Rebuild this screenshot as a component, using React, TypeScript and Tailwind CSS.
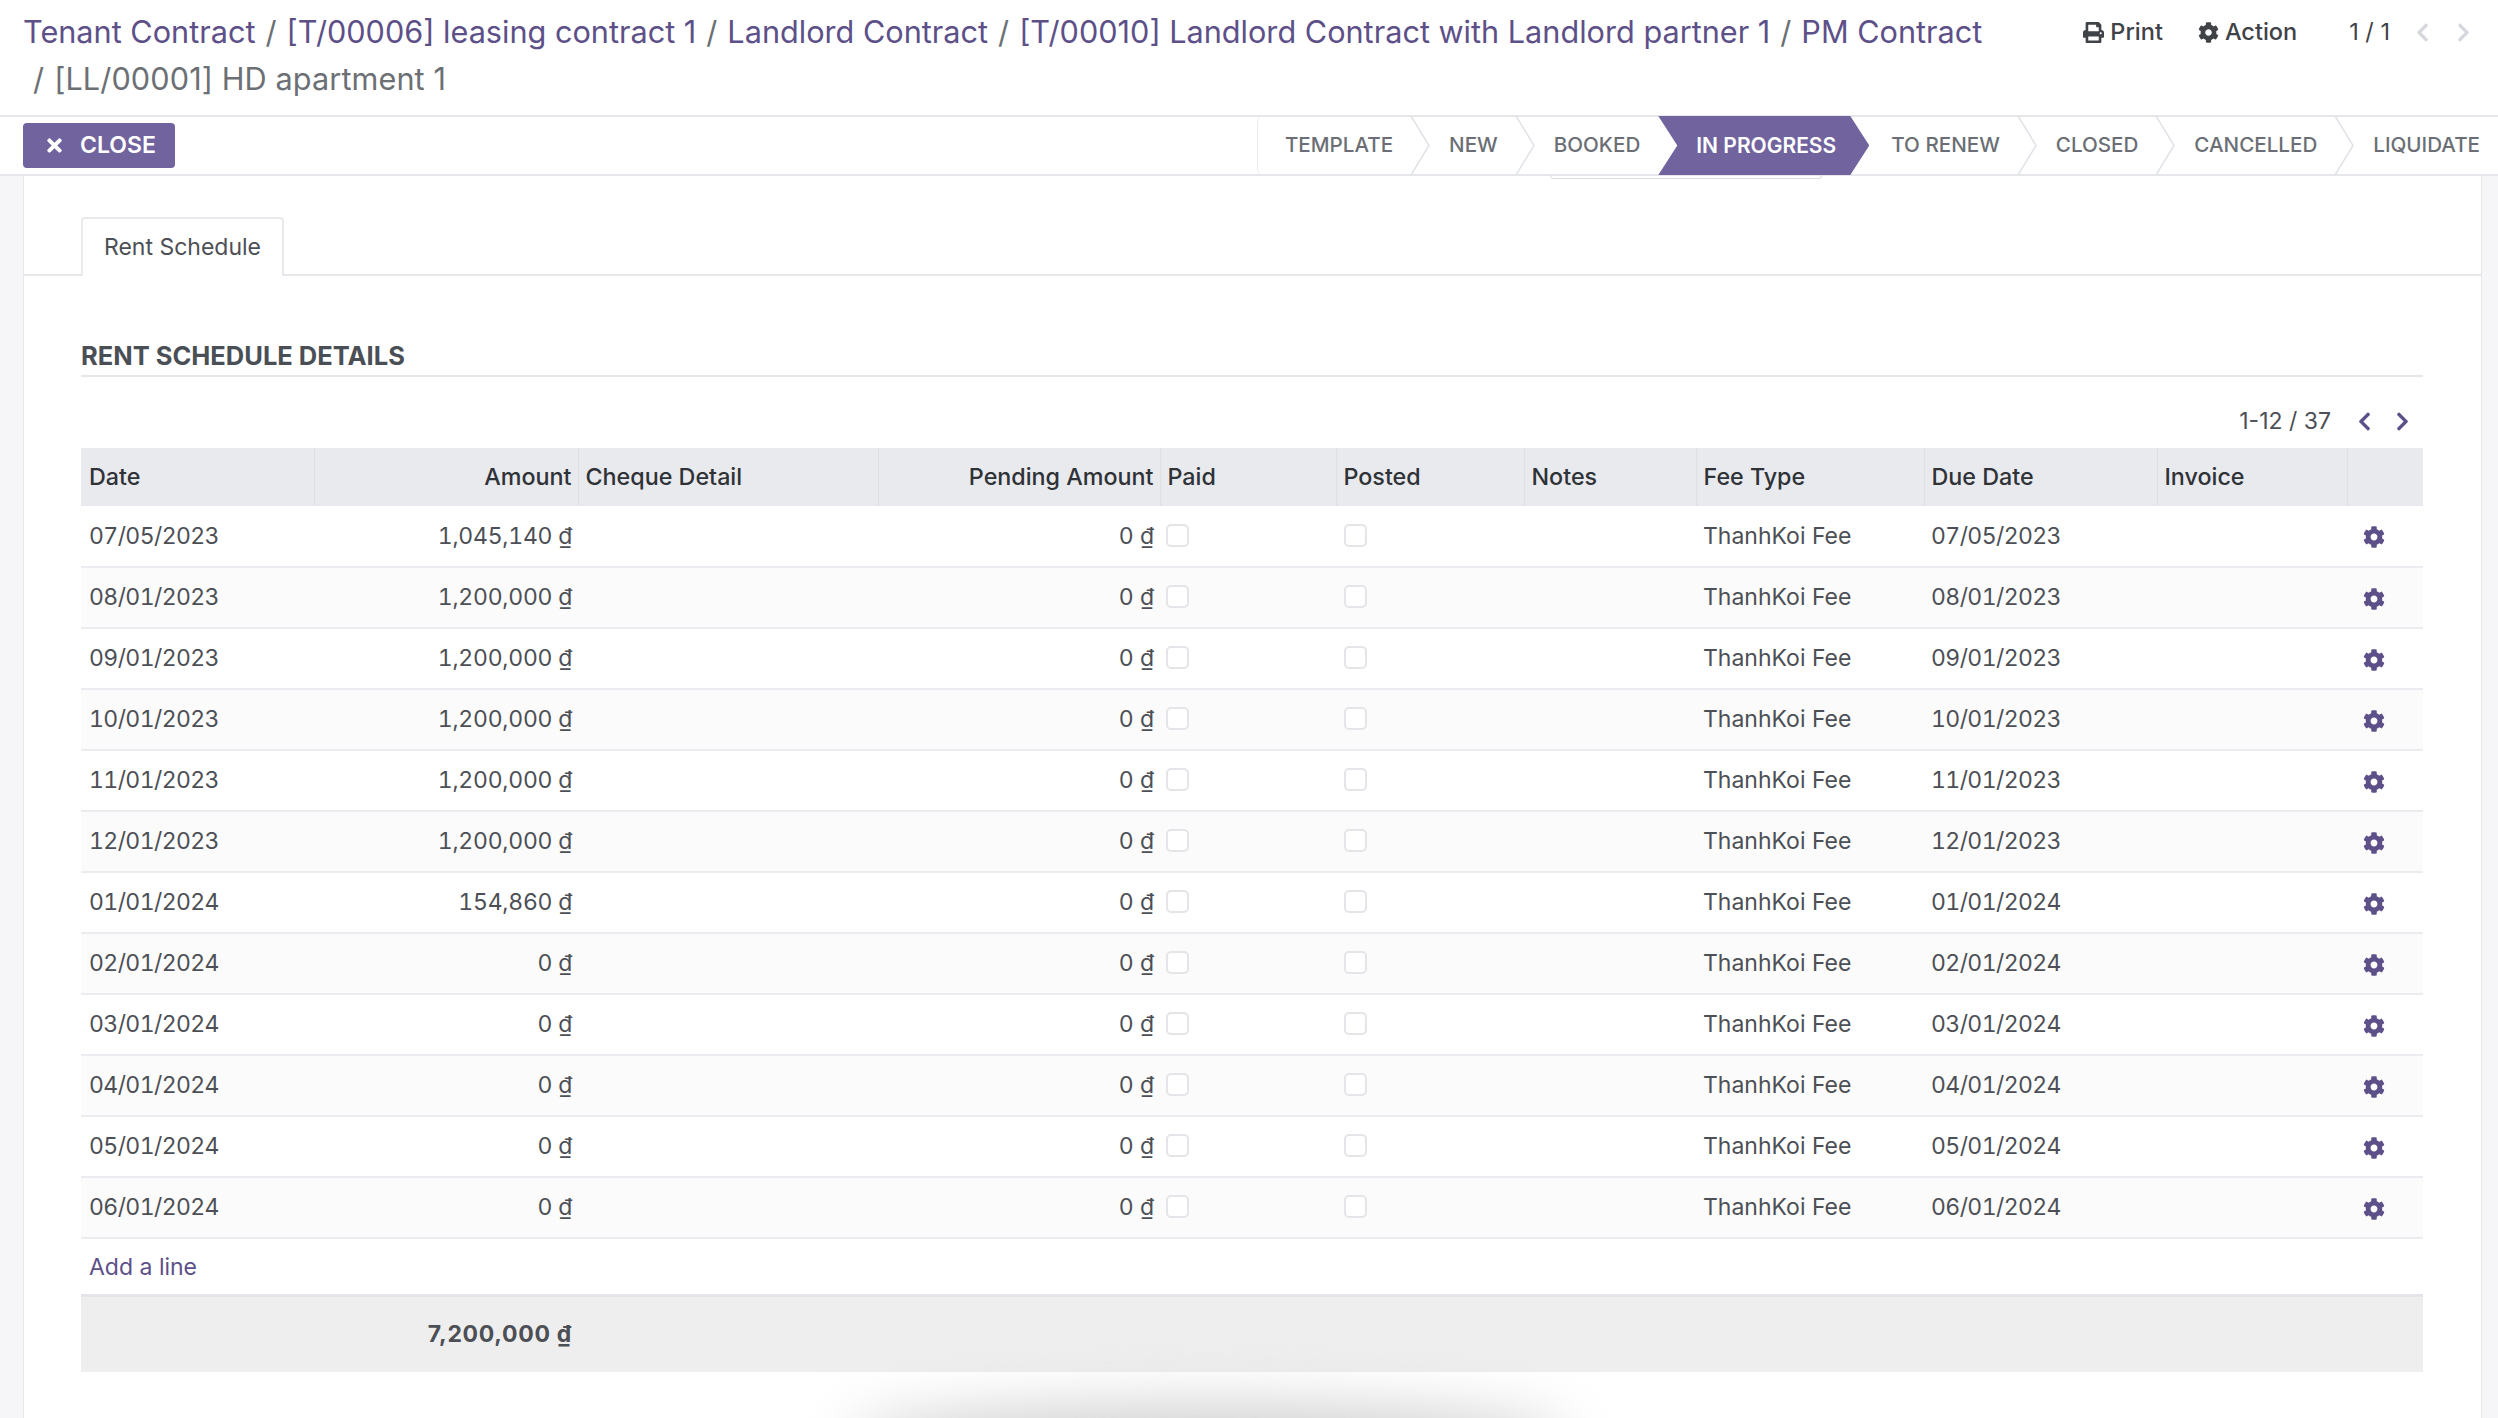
import React from "react";
import { FaCog, FaPrint, FaTimes, FaChevronLeft, FaChevronRight } from "react-icons/fa";

type Row = { date: string; amount: string };

const rows: Row[] = [
  { date: "07/05/2023", amount: "1,045,140" },
  { date: "08/01/2023", amount: "1,200,000" },
  { date: "09/01/2023", amount: "1,200,000" },
  { date: "10/01/2023", amount: "1,200,000" },
  { date: "11/01/2023", amount: "1,200,000" },
  { date: "12/01/2023", amount: "1,200,000" },
  { date: "01/01/2024", amount: "154,860" },
  { date: "02/01/2024", amount: "0" },
  { date: "03/01/2024", amount: "0" },
  { date: "04/01/2024", amount: "0" },
  { date: "05/01/2024", amount: "0" },
  { date: "06/01/2024", amount: "0" },
];

const stages = ["TEMPLATE", "NEW", "BOOKED", "IN PROGRESS", "TO RENEW", "CLOSED", "CANCELLED", "LIQUIDATE"];

const crumbs = [
  "Tenant Contract",
  "[T/00006] leasing contract 1",
  "Landlord Contract",
  "[T/00010] Landlord Contract with Landlord partner 1",
  "PM Contract",
];

const Stage: React.FC<{ label: string; index: number }> = ({ label, index }) => {
  if (label === "IN PROGRESS") {
    return (
      <div className="relative z-10 flex h-[59px] w-[211px] items-center bg-[#71639e] pl-[38px] text-[21px] font-semibold text-white [clip-path:polygon(0_0,192px_0,100%_50%,192px_100%,0_100%,19px_50%)]">
        {label}
      </div>
    );
  }
  let pad = "pl-[38px]";
  if (index === 0) pad = "rounded-l-md border-l border-[#e9ecef] pl-[27px]";
  if (label === "TO RENEW") pad = "pl-[22px]";
  return (
    <div className={`relative flex h-[59px] items-center pr-[18px] text-[20.6px] font-medium text-[#6b6f75] ${pad}`}>
      {label}
      {label !== "LIQUIDATE" && label !== "BOOKED" && (
        <svg className="absolute top-0 left-full h-[59px] w-[20px]" viewBox="0 0 20 59" fill="none">
          <path d="M0 0 L18 29.5 L0 59" stroke="#dfe2e6" strokeWidth="1.5" />
        </svg>
      )}
    </div>
  );
};

const headCell = "border-l border-[#dfe0e5] pr-[6px] pl-[7px] text-[23.3px] font-medium text-[#2f3237]";

export default function App() {
  return (
    <div className="relative h-[1418px] w-[2498px] overflow-hidden bg-white font-['Inter',sans-serif] text-[#4c4f55]">
      <header className="flex h-[115px] items-start justify-between pl-[23px]">
        <div className="w-[1990px] pt-[8px] text-[30.65px] leading-[47px] text-[#6c7075]">
          {crumbs.map((c, i) => (
            <span key={c}>
              {i > 0 && <span className="mx-[10px] text-[#6c7075]">/</span>}
              <span className="text-[#5d5089]">{c}</span>
            </span>
          ))}
          <div className="pl-[10px] tracking-[0.1px]">
            <span className="mr-[10px]">/</span>[LL/00001] HD apartment 1
          </div>
        </div>
        <div className="flex h-[64px] items-center text-[23.5px] text-[#3f4247]">
          <span className="flex items-center gap-[6px] font-medium">
            <FaPrint className="text-[21px]" /> Print
          </span>
          <span className="ml-[35px] flex items-center gap-[6px] font-medium">
            <FaCog className="text-[21px]" /> Action
          </span>
          <span className="ml-[52px]">1 / 1</span>
          <FaChevronLeft className="ml-[22px] text-[21px] text-[#d5d9dd]" />
          <FaChevronRight className="mr-[24px] ml-[20px] text-[21px] text-[#d5d9dd]" />
        </div>
      </header>

      <div className="flex h-[61px] items-center justify-between border-y-2 border-[#e6e7ea] pl-[23px]">
        <button className="flex h-[45px] w-[152px] items-center rounded-[4px] bg-[#71639e] pl-[21px] text-[23px] font-semibold text-white">
          <FaTimes className="mr-[15px] text-[21px]" />
          CLOSE
        </button>
        <div className="flex items-center">
          {stages.map((s, i) => (
            <Stage key={s} label={s} index={i} />
          ))}
        </div>
      </div>

      <div className="absolute top-[175px] left-[1550px] h-[4px] w-[272px] rounded-b-sm border-x border-b border-[#dcdde1]" />

      <div className="flex h-[1242px]">
        <div className="w-[24px] border-r border-[#e6e7ec] bg-[#f6f6f9]" />
        <main className="flex-1 bg-white">
          <div className="h-[100px] border-b-2 border-[#e6e7ec] pt-[41px] pl-[57px]">
            <div className="flex h-[59px] w-[203px] items-center justify-center rounded-t-[4px] border-x-2 border-t-2 border-[#e9eaed] bg-white text-[23px] text-[#4c4f55]">
              Rent Schedule
            </div>
          </div>

          <div className="pt-[65px] pr-[58px] pl-[57px]">
            <h3 className="border-b-2 border-[#e6e7ea] pb-[5px] text-[25.5px] leading-[29px] font-bold text-[#4a4f56]">
              RENT SCHEDULE DETAILS
            </h3>

            <div className="flex h-[71px] items-center justify-end pt-[18px] pr-[10px] text-[23px]">
              <span>1-12 / 37</span>
              <FaChevronLeft className="ml-[23px] text-[21px] text-[#5d5089]" />
              <FaChevronRight className="ml-[17px] text-[21px] text-[#5d5089]" />
            </div>

            <table className="w-[2342px] table-fixed border-collapse">
              <colgroup>
                <col className="w-[233px]" />
                <col className="w-[264px]" />
                <col className="w-[300px]" />
                <col className="w-[282px]" />
                <col className="w-[176px]" />
                <col className="w-[188px]" />
                <col className="w-[172px]" />
                <col className="w-[228px]" />
                <col className="w-[233px]" />
                <col className="w-[190px]" />
                <col className="w-[76px]" />
              </colgroup>
              <thead>
                <tr className="h-[58px] bg-[#e9eaee]">
                  <th className="px-[8px] text-left text-[23.3px] font-medium text-[#2f3237]">Date</th>
                  <th className={`${headCell} text-right`}>Amount</th>
                  <th className={`${headCell} text-left`}>Cheque Detail</th>
                  <th className={`${headCell} text-right`}>Pending Amount</th>
                  <th className={`${headCell} text-left`}>Paid</th>
                  <th className={`${headCell} text-left`}>Posted</th>
                  <th className={`${headCell} text-left`}>Notes</th>
                  <th className={`${headCell} text-left`}>Fee Type</th>
                  <th className={`${headCell} text-left`}>Due Date</th>
                  <th className={`${headCell} text-left`}>Invoice</th>
                  <th className={headCell}></th>
                </tr>
              </thead>
              <tbody className="text-[23px]">
                {rows.map((r, i) => (
                  <tr
                    key={r.date}
                    className={`h-[61px] border-b-2 border-[#ececf0] ${i % 2 === 1 ? "bg-[#fbfbfb]" : "bg-white"}`}
                  >
                    <td className="px-[8px] tracking-[-0.6px] tabular-nums">{r.date}</td>
                    <td className="px-[6px] text-right tracking-[-0.25px] tabular-nums">{r.amount} ₫</td>
                    <td />
                    <td className="px-[6px] text-right tabular-nums">0 ₫</td>
                    <td className="px-[6px]">
                      <div className="mb-[2px] h-[23px] w-[23px] rounded-[5px] border-2 border-[#e4e5e8] bg-white" />
                    </td>
                    <td className="pr-[6px] pl-[8px]">
                      <div className="mb-[2px] h-[23px] w-[23px] rounded-[5px] border-2 border-[#e4e5e8] bg-white" />
                    </td>
                    <td />
                    <td className="pr-[6px] pl-[7px]">ThanhKoi Fee</td>
                    <td className="pr-[6px] pl-[7px] tracking-[-0.6px] tabular-nums">{r.date}</td>
                    <td />
                    <td className="pl-[16px]">
                      <FaCog className="mt-[2px] text-[22px] text-[#5d5089]" />
                    </td>
                  </tr>
                ))}
                <tr className="h-[57px]">
                  <td colSpan={11} className="px-[8px] pt-[2px] text-[#5d5089]">
                    Add a line
                  </td>
                </tr>
              </tbody>
              <tfoot>
                <tr className="h-[77px] border-t-[3px] border-[#e4e4ea] bg-[#eeeeee] text-[23px] font-bold">
                  <td />
                  <td className="px-[6px] text-right tracking-[0.7px]">7,200,000 ₫</td>
                  <td colSpan={9} />
                </tr>
              </tfoot>
            </table>
          </div>
        </main>
        <div className="w-[17px] border-l border-[#e6e7ec] bg-[#f6f6f9]" />
      </div>

      <div className="pointer-events-none absolute top-[1405px] left-[850px] h-[70px] w-[720px] rounded-[50%] bg-[#cfcfcf] blur-[28px]" />
    </div>
  );
}
